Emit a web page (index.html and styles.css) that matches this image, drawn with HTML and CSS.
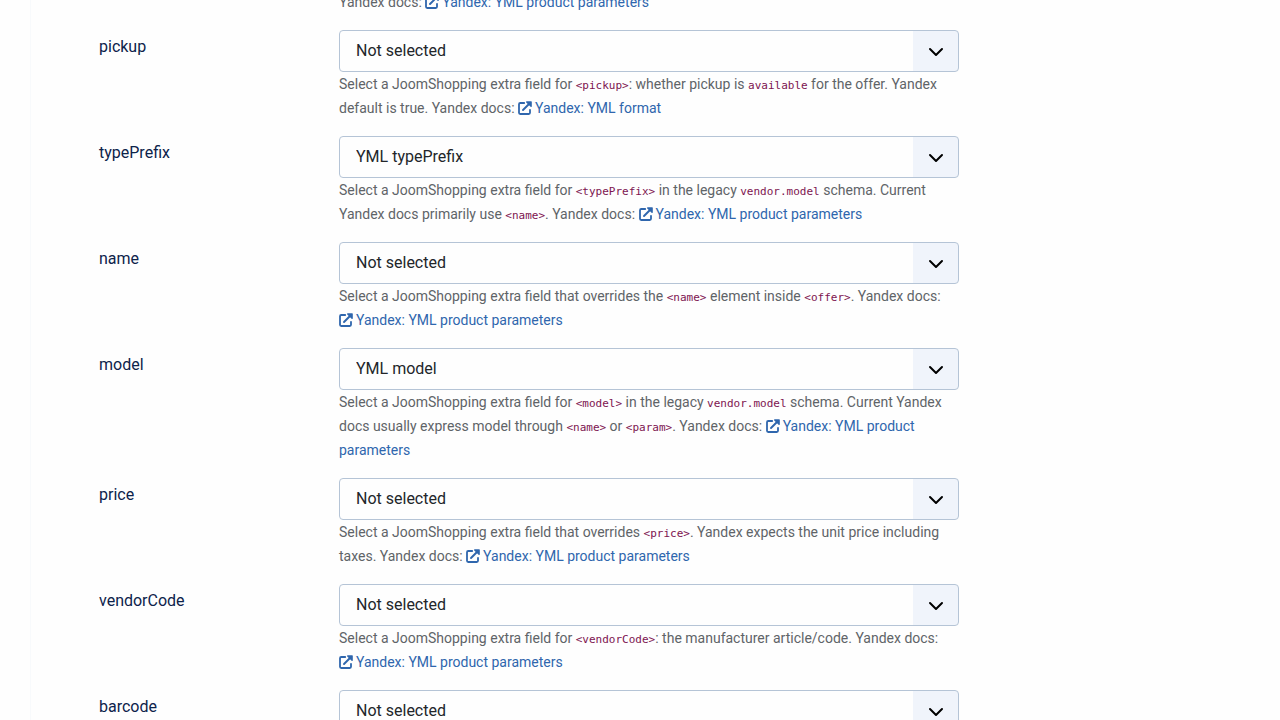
FILE: index.html
```
<!DOCTYPE html>
<html lang="en">
<head>
<meta charset="UTF-8">
  <meta name="viewport" content="width=device-width, initial-scale=1.0">
  <title>YML export fields</title>
  <link rel="stylesheet" href="styles.css">
</head>
<body>
  <svg class="sprite" aria-hidden="true">
    <symbol id="external" viewBox="0 0 14 14">
      <path d="M6.2 2H2.2Q1 2 1 3.200V11.800Q1 13 2.200 13H10.800Q12 13 12 11.800V8.800" fill="none" stroke="currentColor" stroke-width="1.800" stroke-linecap="round"/>
      <path d="M5 9L11 3" fill="none" stroke="currentColor" stroke-width="1.900" stroke-linecap="round"/>
      <path d="M8.300 0.300H13.200Q13.800 0.300 13.800 0.900V5.800L12.800 6L8 1.300Z" fill="currentColor"/>
    </symbol>
  </svg>
  <main class="panel">
    <form class="fields">
      <div class="control-group">
        <div class="controls">
          <div class="help">Yandex docs: <a href="#"><span class="link-start"><svg class="icon" aria-hidden="true"><use href="#external"/></svg>Yandex:</span> YML product parameters</a></div>
        </div>
      </div>

      <div class="control-group">
        <label for="pickup">pickup</label>
        <div class="controls">
          <select id="pickup" class="form-select"><option>Not selected</option></select>
          <div class="help">Select a JoomShopping extra field for <code>&lt;pickup&gt;</code>: whether pickup is <code>available</code> for the offer. Yandex default is true. Yandex docs: <a href="#"><span class="link-start"><svg class="icon" aria-hidden="true"><use href="#external"/></svg>Yandex:</span> YML format</a></div>
        </div>
      </div>

      <div class="control-group">
        <label for="typePrefix">typePrefix</label>
        <div class="controls">
          <select id="typePrefix" class="form-select"><option>YML typePrefix</option></select>
          <div class="help">Select a JoomShopping extra field for <code>&lt;typePrefix&gt;</code> in the legacy <code>vendor.model</code> schema. Current Yandex docs primarily use <code>&lt;name&gt;</code>. Yandex docs: <a href="#"><span class="link-start"><svg class="icon" aria-hidden="true"><use href="#external"/></svg>Yandex:</span> YML product parameters</a></div>
        </div>
      </div>

      <div class="control-group">
        <label for="name">name</label>
        <div class="controls">
          <select id="name" class="form-select"><option>Not selected</option></select>
          <div class="help">Select a JoomShopping extra field that overrides the <code>&lt;name&gt;</code> element inside <code>&lt;offer&gt;</code>. Yandex docs: <a href="#"><span class="link-start"><svg class="icon" aria-hidden="true"><use href="#external"/></svg>Yandex:</span> YML product parameters</a></div>
        </div>
      </div>

      <div class="control-group">
        <label for="model">model</label>
        <div class="controls">
          <select id="model" class="form-select"><option>YML model</option></select>
          <div class="help">Select a JoomShopping extra field for <code>&lt;model&gt;</code> in the legacy <code>vendor.model</code> schema. Current Yandex docs usually express model through <code>&lt;name&gt;</code> or <code>&lt;param&gt;</code>. Yandex docs: <a href="#"><span class="link-start"><svg class="icon" aria-hidden="true"><use href="#external"/></svg>Yandex:</span> YML product parameters</a></div>
        </div>
      </div>

      <div class="control-group">
        <label for="price">price</label>
        <div class="controls">
          <select id="price" class="form-select"><option>Not selected</option></select>
          <div class="help">Select a JoomShopping extra field that overrides <code>&lt;price&gt;</code>. Yandex expects the unit price including taxes. Yandex docs: <a href="#"><span class="link-start"><svg class="icon" aria-hidden="true"><use href="#external"/></svg>Yandex:</span> YML product parameters</a></div>
        </div>
      </div>

      <div class="control-group">
        <label for="vendorCode">vendorCode</label>
        <div class="controls">
          <select id="vendorCode" class="form-select"><option>Not selected</option></select>
          <div class="help">Select a JoomShopping extra field for <code>&lt;vendorCode&gt;</code>: the manufacturer article/code. Yandex docs: <a href="#"><span class="link-start"><svg class="icon" aria-hidden="true"><use href="#external"/></svg>Yandex:</span> YML product parameters</a></div>
        </div>
      </div>

      <div class="control-group">
        <label for="barcode">barcode</label>
        <div class="controls">
          <select id="barcode" class="form-select"><option>Not selected</option></select>
        </div>
      </div>
    </form>
  </main>
</body>
</html>
```
FILE: styles.css
```
body {
  margin: 0;
  height: 100vh;
  overflow: hidden;
  font-family: Roboto, "Liberation Sans", sans-serif;
  font-size: 16px;
  line-height: 24px;
  color: #22262a;
  background-color: #fefefe;
}
.sprite {
  display: none;
}
.panel {
  margin-left: 30px;
  padding: 0 68px;
  border-left: 1px solid #f8fafc;
  box-sizing: border-box;
}
/* the list is scrolled part of the way through a row */
.fields {
  margin-top: -10px;
}
.control-group {
  display: grid;
  grid-template-columns: 240px minmax(0, 620px);
  margin-bottom: 16px;
}
.control-group label {
  padding-top: 5px;
  padding-right: 16px;
  color: #0d234b;
}
.controls {
  grid-column: 2;
}
.form-select {
  appearance: none;
  display: block;
  width: 100%;
  height: 42px;
  padding: 0 60px 2px 16px;
  border: 1px solid #b5c4d6;
  border-radius: 4px;
  font-family: inherit;
  font-size: 16px;
  color: #22262a;
  /* arrow on top of the tinted end block */
  background:
    url("data:image/svg+xml,%3Csvg xmlns='http://www.w3.org/2000/svg' viewBox='0 0 16 16'%3E%3Cpath d='M2 5l6 6 6-6' fill='none' stroke='%23000' stroke-width='2' stroke-linecap='round' stroke-linejoin='round'/%3E%3C/svg%3E") right 14px top 13px / 16px 16px no-repeat,
    linear-gradient(#f0f4fb, #f0f4fb) right / 45px 100% no-repeat,
    #fefefe;
}
.form-select:focus {
  outline: 2px solid #8bb0dc;
}
.help {
  font-size: 14px;
  color: #5f6468;
}
.help code {
  font-family: "DejaVu Sans Mono", monospace;
  font-size: 11px;
  line-height: 1;
  color: #7d1450;
}
.help a {
  color: #2f66ad;
  text-decoration: none;
}
.help a:hover {
  text-decoration: underline;
}
/* keeps the icon on the same line as the first word */
.link-start {
  white-space: nowrap;
}
.icon {
  width: 14px;
  height: 14px;
  margin-right: 3px;
  vertical-align: -2px;
}
```
